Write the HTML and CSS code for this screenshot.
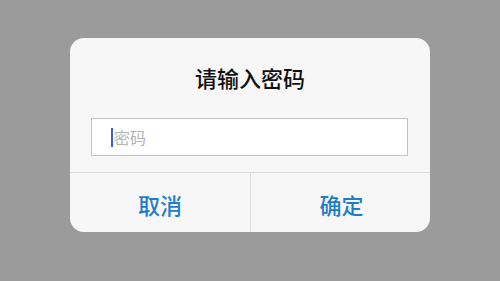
FILE: index.html
```html
<!DOCTYPE html>
<html lang="zh">
<head>
<meta charset="utf-8">
<link rel="stylesheet" href="styles.css">
</head>
<body>
<div class="screen">
  <div class="dialog">
    <div class="title">请输入密码</div>
    <div class="field-wrap">
      <div class="field"><span class="caret"></span><span class="placeholder">密码</span></div>
    </div>
    <div class="actions">
      <div class="btn">取消</div>
      <div class="btn">确定</div>
    </div>
  </div>
</div>
</body>
</html>
```

FILE: styles.css
```css
* { box-sizing: border-box; }
html, body { margin: 0; padding: 0; }
body {
  width: 500px;
  height: 281px;
  background: #9b9b9b;
  font-family: "Noto Sans CJK SC", "Noto Sans", sans-serif;
  overflow: hidden;
}
.screen {
  padding-top: 38px;
  padding-left: 70px;
}
.dialog {
  width: 360px;
  height: 194px;
  background: #f7f7f7;
  border-radius: 14px;
  display: flex;
  flex-direction: column;
  overflow: hidden;
}
.title {
  height: 80px;
  padding-top: 23px;
  text-align: center;
  font-size: 22px;
  line-height: 32px;
  color: #111111;
  font-weight: 500;
}
.field-wrap {
  padding: 0 22px 0 21px;
  height: 54px;
}
.field {
  height: 38px;
  background: #ffffff;
  border: 1px solid #c4c4c4;
  display: flex;
  align-items: center;
  padding-left: 19px;
}
.caret {
  width: 2px;
  height: 19px;
  background: #3f5bd8;
}
.placeholder {
  font-size: 16px;
  color: #b4b4b4;
  margin-left: 1px;
  line-height: 20px;
}
.actions {
  flex: 1;
  display: flex;
  border-top: 1px solid #dcdcdc;
}
.btn {
  flex: 1;
  display: flex;
  align-items: center;
  justify-content: center;
  font-size: 22px;
  font-weight: 500;
  color: #1f7dc8;
  padding-top: 2px;
}
.btn + .btn {
  border-left: 1px solid #dcdcdc;
}
.btn:first-child {
  flex: 0 0 180px;
  padding-left: 2px;
  padding-right: 2px;
}
.btn:last-child {
  padding-left: 2px;
}
```
